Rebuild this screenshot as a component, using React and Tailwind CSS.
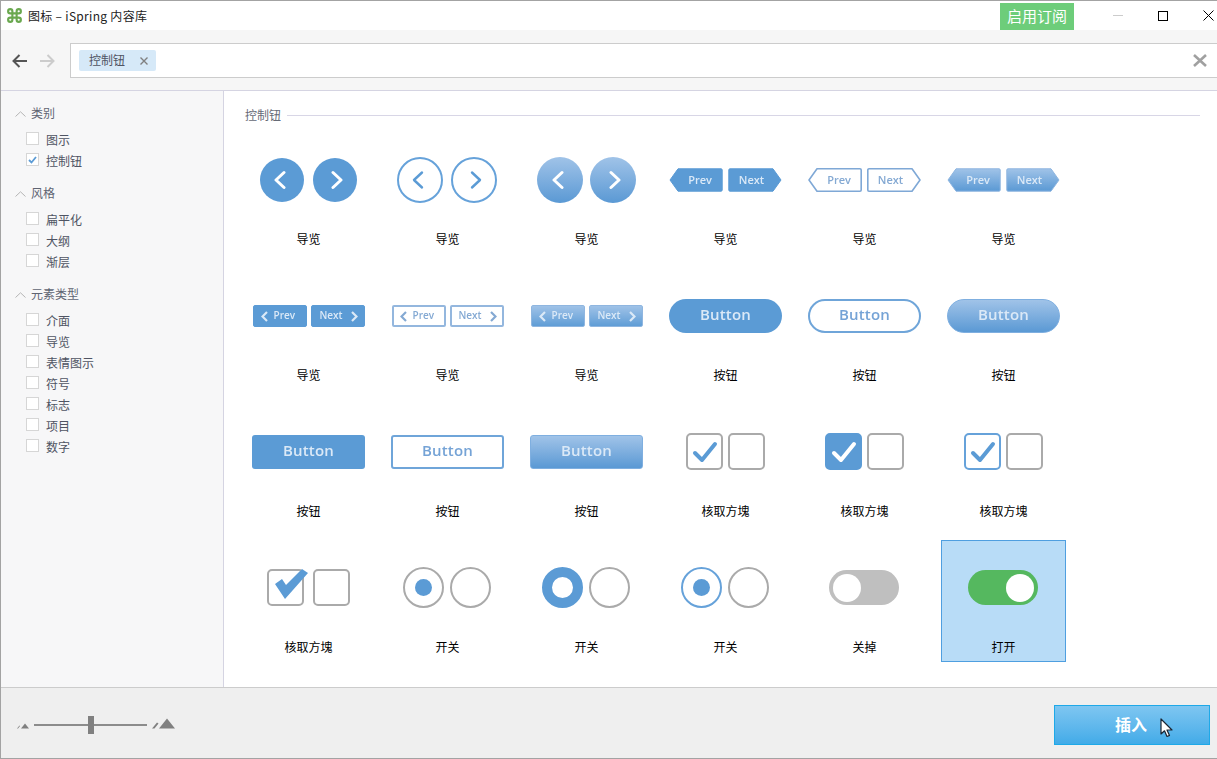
const BLUE = '#5b9bd5'

function Circle({ dir, variant }) {
  const styles = {
    filled: 'w-[44px] h-[44px] bg-[#5b9bd5] text-white',
    outline: 'w-[46px] h-[46px] border-2 border-[#66a2da] bg-white text-[#5b9bd5]',
    gradient: 'w-[46px] h-[46px] bg-gradient-to-b from-[#a0c3e8] to-[#5a99d4] text-white',
  }
  return (
    <div className={`rounded-full flex items-center justify-center ${styles[variant]}`}>
      <svg width="16" height="22" viewBox="0 0 16 22" fill="none" stroke="currentColor" strokeWidth={variant === 'outline' ? 2.4 : 3} strokeLinecap="round" strokeLinejoin="round">
        {dir === 'l' ? <path d="M10 3.5 L2 11 L10 18.5" /> : <path d="M6 3.5 L14 11 L6 18.5" />}
      </svg>
    </div>
  )
}

function HexButton({ kind, variant, id }) {
  const prev = kind === 'Prev'
  const d = prev
    ? 'M9 .8 H52 a1.2 1.2 0 0 1 1.2 1.2 V22 a1.2 1.2 0 0 1 -1.2 1.2 H9 L1 12 Z'
    : 'M2 .8 H45 L53 12 L45 23.2 H2 a1.2 1.2 0 0 1 -1.2 -1.2 V2 a1.2 1.2 0 0 1 1.2 -1.2 Z'
  const fill = variant === 'filled' ? BLUE : variant === 'outline' ? '#fff' : `url(#${id})`
  const stroke = variant === 'filled' ? BLUE : variant === 'outline' ? '#7fa8d6' : '#8fb6e0'
  const color = variant === 'outline' ? '#84a9d3' : '#dbe9f7'
  return (
    <svg width="54" height="24" viewBox="0 0 54 24">
      <defs>
        <linearGradient id={id} x1="0" y1="0" x2="0" y2="1">
          <stop offset="0" stopColor="#a0c3e8" />
          <stop offset="1" stopColor="#5a99d4" />
        </linearGradient>
      </defs>
      <path d={d} fill={fill} stroke={stroke} strokeWidth={variant === 'outline' ? 1.6 : 1} strokeLinejoin="round" />
      <text x={prev ? 31 : 23.5} y="16" textAnchor="middle" fontSize="11" fontWeight="600" fill={color} className="font-['Open_Sans',sans-serif]">{kind}</text>
    </svg>
  )
}

function ArrowButton({ kind, variant }) {
  const styles = {
    filled: 'border bg-[#5b9bd5] border-[#5b9bd5] text-[#dbe9f7]',
    outline: 'border-2 bg-white border-[#94b7de] text-[#84a9d3]',
    gradient: 'border bg-gradient-to-b from-[#9fc2e7] to-[#5f9dd6] border-[#8fb6e0] text-[#dbe9f7]',
  }
  const prev = kind === 'Prev'
  const inset = variant === 'outline'
    ? (prev ? 'pl-[6px] gap-[6px]' : 'justify-end pr-[5px] gap-[8px]')
    : (prev ? 'pl-[7px] gap-[6px]' : 'justify-end pr-[6px] gap-[8px]')
  return (
    <div className={`w-[54px] h-[22px] rounded-[2px] flex items-center text-[10px] font-semibold font-['Open_Sans',sans-serif] ${inset} ${styles[variant]}`}>
      {prev && (
        <svg width="7" height="11" viewBox="0 0 7 11" fill="none" stroke="currentColor" strokeWidth="2.2">
          <path d="M6 1 L1.5 5.5 L6 10" />
        </svg>
      )}
      <span className="-mt-[1px]">{kind}</span>
      {!prev && (
        <svg width="7" height="11" viewBox="0 0 7 11" fill="none" stroke="currentColor" strokeWidth="2.2">
          <path d="M1 1 L5.5 5.5 L1 10" />
        </svg>
      )}
    </div>
  )
}

function WideButton({ variant, round }) {
  const styles = {
    filled: 'bg-[#5b9bd5] text-[#dbe9f7]',
    outline: 'bg-white border-2 border-[#6fa5d9] text-[#75a3d6]',
    gradient: 'bg-gradient-to-b from-[#a0c3e8] to-[#5a99d4] border border-[#7fafe0] text-[#dbe9f7]',
  }
  return (
    <div className={`w-[113px] h-[34px] pb-[3px] flex items-center justify-center text-[15px] font-semibold tracking-[0.2px] font-['Open_Sans',sans-serif] ${round ? 'rounded-full' : 'rounded-[3px]'} ${styles[variant]}`}>
      Button
    </div>
  )
}

function Box({ className = '', children }) {
  return (
    <div className={`w-[37px] h-[37px] rounded-[5px] border-2 flex items-center justify-center ${className}`}>
      {children}
    </div>
  )
}

function Tick({ color }) {
  return (
    <svg width="26" height="24" viewBox="0 0 26 24" fill="none" stroke={color} strokeWidth="4" strokeLinecap="round" strokeLinejoin="round">
      <path d="M3 13 L10 20 L23 4" />
    </svg>
  )
}

function CheckPair({ variant }) {
  if (variant === 'big') {
    return (
      <div className="flex gap-[9px] -mt-[1px]">
        <div className="relative">
          <Box className="border-[#aaaaaa] bg-white" />
          {/* oversized tick sticks out of its box */}
          <svg className="absolute left-[8px] top-0" width="34" height="31" viewBox="0 0 34 31">
            <path d="M0 15 L7 10 L11 16 L27 0 L33 4 L10 30 Z" fill={BLUE} />
          </svg>
        </div>
        <Box className="border-[#aaaaaa] bg-white" />
      </div>
    )
  }
  return (
    <div className="flex gap-[5px] -mt-[1px]">
      {variant === 'plain' && <Box className="border-[#aaaaaa] bg-white"><Tick color={BLUE} /></Box>}
      {variant === 'filled' && <Box className="border-[#5b9bd5] bg-[#5b9bd5]"><Tick color="#fff" /></Box>}
      {variant === 'outline' && <Box className="border-[#66a2da] bg-white"><Tick color={BLUE} /></Box>}
      <Box className="border-[#aaaaaa] bg-white" />
    </div>
  )
}

function RadioPair({ variant }) {
  return (
    <div className="flex gap-[6px] -mt-[1px] -ml-[1px]">
      {variant === 'plain' && (
        <div className="w-[41px] h-[41px] rounded-full border-2 border-[#aaaaaa] flex items-center justify-center">
          <div className="w-[17px] h-[17px] rounded-full bg-[#5b9bd5]" />
        </div>
      )}
      {variant === 'filled' && <div className="w-[41px] h-[41px] rounded-full border-[10px] border-[#5b9bd5] bg-white" />}
      {variant === 'outline' && (
        <div className="w-[41px] h-[41px] rounded-full border-2 border-[#66a2da] flex items-center justify-center">
          <div className="w-[17px] h-[17px] rounded-full bg-[#5b9bd5]" />
        </div>
      )}
      <div className="w-[41px] h-[41px] rounded-full border-2 border-[#aaaaaa] bg-white" />
    </div>
  )
}

function Toggle({ on }) {
  return (
    <div className={`w-[70px] h-[35px] -mt-[1px] -ml-[1px] rounded-full flex items-center px-[4px] ${on ? 'bg-[#55b85f] justify-end' : 'bg-[#bfbfbf] justify-start'}`}>
      <div className="w-[28px] h-[28px] rounded-full bg-white" />
    </div>
  )
}

const cells = [
  { label: '导览', thumb: <div className="flex gap-[9px]"><Circle dir="l" variant="filled" /><Circle dir="r" variant="filled" /></div> },
  { label: '导览', thumb: <div className="flex gap-[8px] -ml-[1px]"><Circle dir="l" variant="outline" /><Circle dir="r" variant="outline" /></div> },
  { label: '导览', thumb: <div className="flex gap-[7px]"><Circle dir="l" variant="gradient" /><Circle dir="r" variant="gradient" /></div> },
  { label: '导览', thumb: <div className="flex gap-[5px]"><HexButton kind="Prev" variant="filled" id="h1" /><HexButton kind="Next" variant="filled" id="h2" /></div> },
  { label: '导览', thumb: <div className="flex gap-[5px]"><HexButton kind="Prev" variant="outline" id="h3" /><HexButton kind="Next" variant="outline" id="h4" /></div> },
  { label: '导览', thumb: <div className="flex gap-[5px]"><HexButton kind="Prev" variant="gradient" id="h5" /><HexButton kind="Next" variant="gradient" id="h6" /></div> },
  { label: '导览', thumb: <div className="flex gap-[4px]"><ArrowButton kind="Prev" variant="filled" /><ArrowButton kind="Next" variant="filled" /></div> },
  { label: '导览', thumb: <div className="flex gap-[4px]"><ArrowButton kind="Prev" variant="outline" /><ArrowButton kind="Next" variant="outline" /></div> },
  { label: '导览', thumb: <div className="flex gap-[4px]"><ArrowButton kind="Prev" variant="gradient" /><ArrowButton kind="Next" variant="gradient" /></div> },
  { label: '按钮', thumb: <WideButton variant="filled" round /> },
  { label: '按钮', thumb: <WideButton variant="outline" round /> },
  { label: '按钮', thumb: <WideButton variant="gradient" round /> },
  { label: '按钮', thumb: <WideButton variant="filled" /> },
  { label: '按钮', thumb: <WideButton variant="outline" /> },
  { label: '按钮', thumb: <WideButton variant="gradient" /> },
  { label: '核取方塊', thumb: <CheckPair variant="plain" /> },
  { label: '核取方塊', thumb: <CheckPair variant="filled" /> },
  { label: '核取方塊', thumb: <CheckPair variant="outline" /> },
  { label: '核取方塊', thumb: <CheckPair variant="big" /> },
  { label: '开关', thumb: <RadioPair variant="plain" /> },
  { label: '开关', thumb: <RadioPair variant="filled" /> },
  { label: '开关', thumb: <RadioPair variant="outline" /> },
  { label: '关掉', thumb: <Toggle /> },
  { label: '打开', thumb: <Toggle on />, selected: true },
]

const groups = [
  { title: '类别', items: [{ name: '图示' }, { name: '控制钮', checked: true }] },
  { title: '风格', items: [{ name: '扁平化' }, { name: '大纲' }, { name: '渐层' }] },
  { title: '元素类型', items: [{ name: '介面' }, { name: '导览' }, { name: '表情图示' }, { name: '符号' }, { name: '标志' }, { name: '项目' }, { name: '数字' }] },
]

function Sidebar() {
  return (
    <aside className="w-[223px] shrink-0 bg-[#f7f7f8] border-r border-[#d5d4e2] pt-[12px]">
      {groups.map((g, i) => (
        <div key={g.title} className={i > 0 ? 'mt-[12px]' : ''}>
          <div className="h-[21px] mb-[5px] flex items-center pl-[14px] gap-[5px] text-[12px] text-[#5f6472]">
            <svg width="11" height="6" viewBox="0 0 11 6" fill="none" stroke="#b5b5b5" strokeWidth="1">
              <path d="M.5 5.5 L5.5 .8 L10.5 5.5" />
            </svg>
            <span className="-mt-[2px]">{g.title}</span>
          </div>
          {g.items.map(item => (
            <div key={item.name} className="h-[21px] flex items-center pl-[25px] gap-[7px] text-[12px] text-[#4f5463]">
              <div className="w-[13px] h-[13px] -mt-[2px] border border-[#d6d6d6] bg-white flex items-center justify-center">
                {item.checked && (
                  <svg width="9" height="8" viewBox="0 0 9 8" fill="none" stroke="#5b9bd5" strokeWidth="1.8">
                    <path d="M1 4 L3.5 6.5 L8 1" />
                  </svg>
                )}
              </div>
              <span>{item.name}</span>
            </div>
          ))}
        </div>
      ))}
    </aside>
  )
}

export default function App() {
  return (
    <div className="relative w-[1217px] h-[759px] overflow-hidden flex flex-col border-t border-l border-b border-[#a3a3a3] bg-white font-['Noto_Sans_CJK_SC','Liberation_Sans',sans-serif]">

      {/* Title bar */}
      <div className="h-[29px] shrink-0 flex items-center bg-white">
        <svg className="ml-[5px]" width="17" height="17" viewBox="0 0 24 24" fill="none" stroke="#6aa84f" strokeWidth="3">
          <path d="M18 3a3 3 0 0 0-3 3v12a3 3 0 0 0 3 3 3 3 0 0 0 3-3 3 3 0 0 0-3-3H6a3 3 0 0 0-3 3 3 3 0 0 0 3 3 3 3 0 0 0 3-3V6a3 3 0 0 0-3-3 3 3 0 0 0-3 3 3 3 0 0 0 3 3h12a3 3 0 0 0 3-3 3 3 0 0 0-3-3z" />
        </svg>
        <span className="ml-[5px] text-[12px] tracking-[0.3px] text-[#222222]">图标 – iSpring 内容库</span>
        <div className="ml-auto h-[27px] w-[74px] mt-[2px] bg-[#6dcd7a] text-white text-[15px] flex items-center justify-center">启用订阅</div>
        <div className="w-[10px] h-[1px] bg-[#cccccc] ml-[39px]" />
        <div className="w-[10px] h-[10px] border border-black ml-[35px]" />
        <svg className="ml-[35px] mr-[3px]" width="11" height="11" viewBox="0 0 11 11" stroke="#000" strokeWidth="1">
          <path d="M.5 .5 L10.5 10.5 M10.5 .5 L.5 10.5" />
        </svg>
      </div>

      {/* Toolbar */}
      <div className="h-[61px] shrink-0 bg-[#f6f6f6] border-b border-[#d5d4e2] flex items-center">
        <svg className="ml-[11px] mt-[2px]" width="15" height="14" viewBox="0 0 15 14" fill="none" stroke="#555555" strokeWidth="2">
          <path d="M15 7 H2 M7.5 1 L1.5 7 L7.5 13" />
        </svg>
        <svg className="ml-[13px] mt-[2px]" width="15" height="14" viewBox="0 0 15 14" fill="none" stroke="#cccccc" strokeWidth="2">
          <path d="M0 7 H13 M7.5 1 L13.5 7 L7.5 13" />
        </svg>
        <div className="ml-[15px] flex-1 h-[35px] mt-[1px] bg-white border-y border-l border-[#cccccc] flex items-center pl-[8px] pr-[10px]">
          <div className="w-[77px] h-[21px] rounded-[2px] bg-[#d6e9f8] flex items-center pl-[10px] text-[12px] text-[#4f5463]">
            <span className="-mt-[1px]">控制钮</span>
            <svg className="ml-[15px]" width="8" height="8" viewBox="0 0 8 8" stroke="#808080" strokeWidth="1.4">
              <path d="M.5 .5 L7.5 7.5 M7.5 .5 L.5 7.5" />
            </svg>
          </div>
          <svg className="ml-auto" width="14" height="13" viewBox="0 0 14 13" stroke="#a0a0a0" strokeWidth="2.6">
            <path d="M1 1 L13 12 M13 1 L1 12" />
          </svg>
        </div>
      </div>

      <div className="flex-1 flex min-h-0">
        <Sidebar />

        {/* Library grid */}
        <main className="flex-1 pt-[14px] pl-[21px] pr-[17px] bg-white">
          <div className="h-[20px] flex items-center gap-[6px] text-[12px] text-[#666a76]">
            <span className="-mt-[1px]">控制钮</span>
            <div className="flex-1 h-[1px] bg-[#d8d6e6]" />
          </div>
          <div className="mt-[7px] ml-[1px] grid grid-cols-[repeat(6,125px)] gap-[14px]">
            {cells.map((c, i) => (
              <div key={i} className={`h-[122px] flex flex-col items-center border ${c.selected ? 'bg-[#b8dcf7] border-[#4f9fe0]' : 'border-transparent'}`}>
                <div className="h-[94px] mb-[1px] shrink-0 flex items-center justify-center blur-[0.4px]">{c.thumb}</div>
                <div className="h-[22px] flex items-center text-[12px] text-black">{c.label}</div>
              </div>
            ))}
          </div>
        </main>
      </div>

      {/* Bottom bar */}
      <div className="h-[71px] shrink-0 bg-[#efefef] border-t border-[#cccccc] flex items-center pt-[4px] pl-[15px] pr-[7px]">
        <svg className="mt-[2px]" width="13" height="6" viewBox="0 0 13 6" fill="#808080">
          <path d="M1 5.5 L3.5 2.5 L4 3 L2 5.5 Z M5 5.5 L9 .5 L13 5.5 Z" />
        </svg>
        <div className="relative ml-[5px] w-[113px] h-[2px] bg-[#8c8c8c]">
          <div className="absolute left-[54px] -top-[8px] w-[6px] h-[18px] bg-[#808080]" />
        </div>
        <svg className="ml-[5px] -mt-[3px]" width="23" height="11" viewBox="0 0 23 11" fill="#808080">
          <path d="M0 10.5 L5 4.5 L6.5 5.5 L2.5 10.5 Z M7 10.5 L15 .5 L23 10.5 Z" />
        </svg>
        <button className="relative ml-auto w-[156px] h-[40px] border border-[#1ea9e8] bg-gradient-to-b from-[#7ec6f1] to-[#41abe8] text-white text-[16px] font-bold flex items-center justify-center">
          <span className="-ml-[2px] -mt-[2px]">插入</span>
          <svg className="absolute left-[105px] top-[12px]" width="13" height="20" viewBox="0 0 13 20">
            <path d="M1 1 V16 L4.5 12.8 L7 18.5 L9.5 17.4 L7 12 H12 Z" fill="#fff" stroke="#1a2433" strokeWidth="1.2" strokeLinejoin="round" />
          </svg>
        </button>
      </div>
    </div>
  )
}
